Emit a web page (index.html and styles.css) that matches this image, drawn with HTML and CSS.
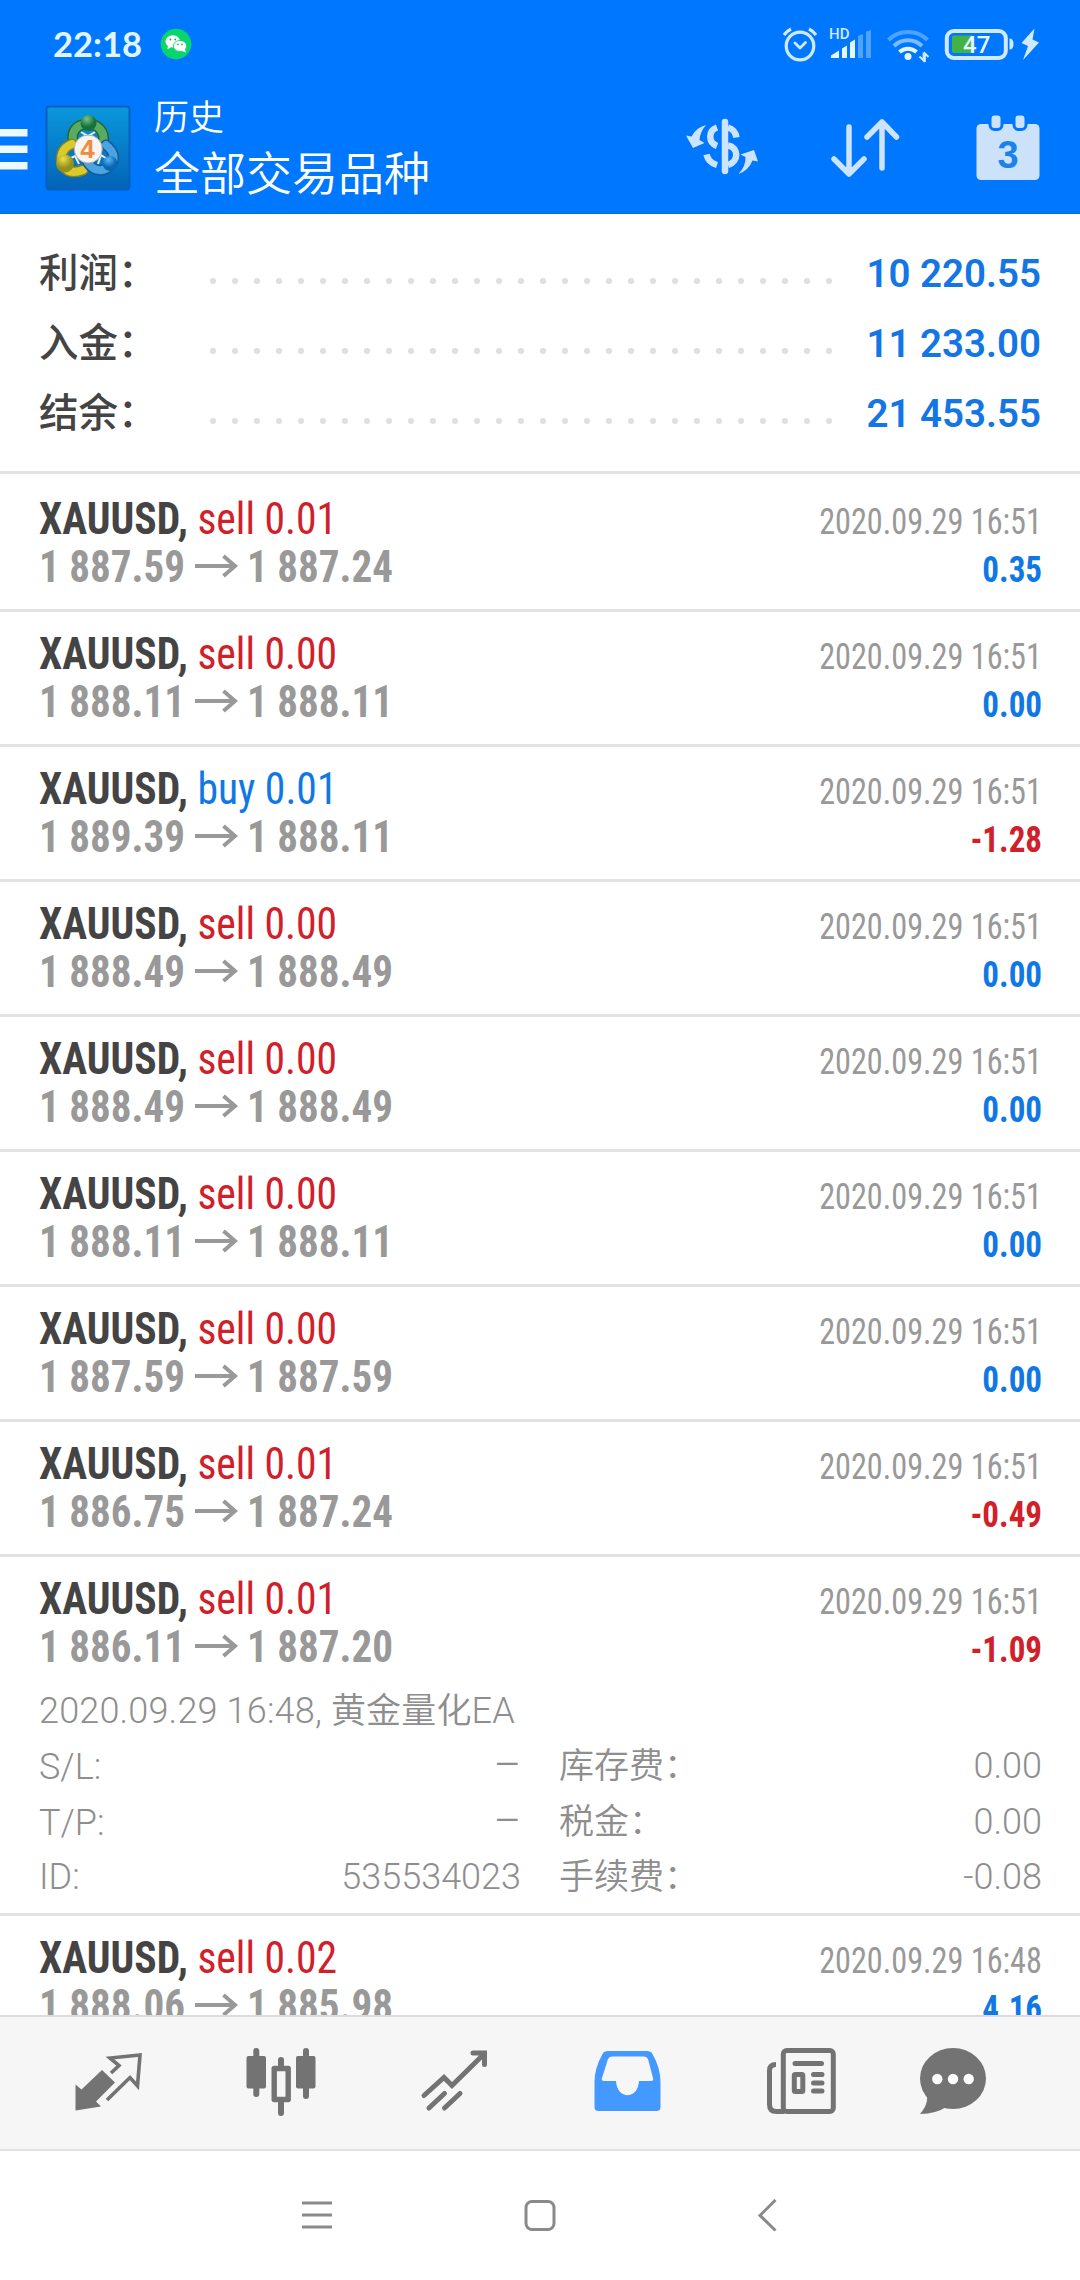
FILE: index.html
```
<!DOCTYPE html>
<html lang="zh-CN">
<head>
<meta charset="utf-8">
<title>历史</title>
<link rel="stylesheet" href="styles.css">
</head>
<body>
<div class="screen">
  <header class="header">
    <div class="status">
      <span class="clock">22:18</span>
      <svg class="wechat" width="32" height="32" viewBox="0 0 32 32">
        <circle cx="16" cy="16" r="15.3" fill="#06d66b"/>
        <ellipse cx="12.8" cy="13.4" rx="7.3" ry="6.2" fill="#fff"/>
        <path d="M8 17l-.5 4.3 4-2.2z" fill="#fff"/>
        <ellipse cx="20" cy="18" rx="6.6" ry="5.6" fill="#fff" stroke="#06d66b" stroke-width=".8"/>
        <path d="M21 22.5l4.7 2-.8-4z" fill="#fff"/>
        <g fill="#06a858"><circle cx="10.4" cy="11.5" r=".9"/><circle cx="15.2" cy="11.5" r=".9"/><circle cx="17.9" cy="16.4" r=".8"/><circle cx="22" cy="16.4" r=".8"/></g>
      </svg>
      <svg class="indicators" width="264" height="48" viewBox="780 20 264 48">
        <g fill="none" stroke="#cfeaff" stroke-width="3.2" stroke-linecap="round" stroke-linejoin="round">
          <circle cx="800" cy="46" r="13.8"/>
          <path d="M795 43l5 5 5.5-5.5" stroke-width="2.8"/>
          <path d="M784 35q3-4 7-6M809 29q4 2 7 6" stroke-linecap="butt"/>
        </g>
        <text x="829" y="39.3" class="hd">HD</text>
        <path d="M831 58v-2.500l8-5v7.500zM842 58V48.500l5-3V58zM850 58V42.500l5-3V58z" fill="#e6f6ff"/>
        <path d="M858 58V36l5-2v24zM866 58V31.500l5-1.500v28z" fill="#4da3ff"/>
        <g fill="none" stroke-width="4">
          <path d="M888.500 40a28 28 0 0 1 39 0" stroke="#4da3ff"/>
          <path d="M894 46a20 20 0 0 1 28 0" stroke="#7dbcff"/>
          <path d="M899.500 52a12.500 12.500 0 0 1 17 0" stroke="#e6f6ff"/>
        </g>
        <circle cx="908" cy="56.600" r="3.500" fill="#e6f6ff"/>
        <path d="M919.500 56.500l4 4V52.500M928.500 57l-3.500-3.500v8.500" fill="none" stroke="#cfeaff" stroke-width="1.800"/>
        <rect x="952" y="35.500" width="22" height="17.500" rx="2" fill="#43b244"/>
        <rect x="946.800" y="31" width="59" height="27" rx="7" fill="none" stroke="#cfeaff" stroke-width="4"/>
        <path d="M1009.500 38.500q4 0 4 5.500t-4 5.500z" fill="#cfeaff"/>
        <text x="963" y="52.800" class="charge">47</text>
        <path d="M1034.500 28.500l-13 14.500 6.500 3-5 14 16-17.500-6.500-3z" fill="#cfeaff"/>
      </svg>
    </div>
    <div class="appbar">
      <svg class="menu" width="28" height="44" viewBox="0 0 28 44"><path d="M0 2h27.500v7.500H0zM0 18.500h27.500v7.500H0zM0 35h27.500v7.500H0z" fill="#eef8ff"/></svg>
      <svg class="logo" width="86" height="86" viewBox="0 0 86 86">
        <defs>
          <linearGradient id="tile" x2="0" y2="1"><stop offset="0" stop-color="#0a98dc"/><stop offset="1" stop-color="#0463b6"/></linearGradient>
          <radialGradient id="gr" cx=".4" cy=".25"><stop offset="0" stop-color="#7cc487"/><stop offset="1" stop-color="#15713a"/></radialGradient>
          <radialGradient id="ye" cx=".4" cy=".25"><stop offset="0" stop-color="#f0e14a"/><stop offset="1" stop-color="#94901c"/></radialGradient>
          <radialGradient id="bl" cx=".4" cy=".25"><stop offset="0" stop-color="#5db8f3"/><stop offset="1" stop-color="#0868b4"/></radialGradient>
        </defs>
        <rect x="1.500" y="1.500" width="83" height="83" rx="3" fill="url(#tile)" stroke="#0561c0" stroke-width="2"/>
        <g fill="none" stroke-linecap="round">
          <path d="M28 36C26 24 34 19 43 19s18 7 15 19" stroke="#236637" stroke-width="11"/>
          <path d="M28 36C26 24 34 19 43 19s18 7 15 19" stroke="#58ac62" stroke-width="8"/>
          <path d="M27 39C17 43 14 52 18 60s12 8 20 5" stroke="#858124" stroke-width="11"/>
          <path d="M27 39C17 43 14 52 18 60s12 8 20 5" stroke="#d9cb2b" stroke-width="8"/>
          <path d="M61 40C71 48 70 56 65 61s-15 7-22-3" stroke="#145a98" stroke-width="11"/>
          <path d="M61 40C71 48 70 56 65 61s-15 7-22-3" stroke="#4ba3e2" stroke-width="8"/>
        </g>
        <path d="M36 27l7 4 7-4M24 54l6-3 4 8M62 54l-6-4-3 9" fill="none" stroke="#e9f3ec" stroke-width="2"/>
        <circle cx="43.500" cy="18" r="8" fill="url(#gr)"/>
        <circle cx="20" cy="58.500" r="9" fill="url(#ye)"/>
        <circle cx="65" cy="58.500" r="7.500" fill="url(#bl)"/>
        <circle cx="43.200" cy="44" r="14" fill="#f7f5f2" stroke="#b7b0a0"/>
        <text x="42.500" y="53" class="four">4</text>
      </svg>
      <div class="titles"><div class="title">历史</div><div class="subtitle">全部交易品种</div></div>
      <svg class="actions" width="376" height="70" viewBox="680 112 376 70">
        <g fill="none" stroke="#cce4ff" stroke-width="6.500">
          <path d="M725 122v49" stroke-linecap="round"/>
          <path d="M717 127.500c-9 3-9 15 0 18.500M706.500 154.500q2 8 10.500 10.500M728 127.500q7 2 8.500 10M728 145.500c11 2 11 16 0 19.500"/>
        </g>
        <path d="M686 135.500l5.500 1Q696 127.500 706 125 700 132 699.500 140l5 3-11.500 5zM738.500 174Q749 170 752.500 160.500l5.500 1-4-11.500-13.500 4.500 5 2.500Q746 166 738.500 174z" fill="#cce4ff"/>
        <path d="M849 127v46M834 159l15 15 15-15M882 168v-46M867 137l15-15 14.500 15" fill="none" stroke="#cce4ff" stroke-width="5.500" stroke-linecap="round" stroke-linejoin="round"/>
        <rect x="976.500" y="124" width="63" height="56" rx="4.500" fill="#cce2fa"/>
        <rect x="991.500" y="115.500" width="9" height="12.500" rx="3" fill="#cce2fa" stroke="#0077ff" stroke-width="6" paint-order="stroke"/>
        <rect x="1015.500" y="115.500" width="9" height="12.500" rx="3" fill="#cce2fa" stroke="#0077ff" stroke-width="6" paint-order="stroke"/>
        <text x="1008" y="167.500" class="day">3</text>
      </svg>
    </div>
  </header>

  <section class="summary">
    <div class="sum"><span>利润：</span><i class="dots"></i><b>10 220.55</b></div>
    <div class="sum"><span>入金：</span><i class="dots"></i><b>11 233.00</b></div>
    <div class="sum"><span>结余：</span><i class="dots"></i><b>21 453.55</b></div>
  </section>

  <main class="deals">
    <article class="deal first">
      <div class="line"><span class="sym"><b>XAUUSD,</b> <span class="neg">sell 0.01</span></span><time>2020.09.29 16:51</time></div>
      <div class="line"><span class="price">1 887.59</span><svg class="arrow" viewBox="0 0 43 24"><path d="M0 12h40M28.500 2L40 12 28.500 22"/></svg><span class="price">1 887.24</span><span class="profit pos">0.35</span></div>
    </article>
    <article class="deal">
      <div class="line"><span class="sym"><b>XAUUSD,</b> <span class="neg">sell 0.00</span></span><time>2020.09.29 16:51</time></div>
      <div class="line"><span class="price">1 888.11</span><svg class="arrow" viewBox="0 0 43 24"><path d="M0 12h40M28.500 2L40 12 28.500 22"/></svg><span class="price">1 888.11</span><span class="profit pos">0.00</span></div>
    </article>
    <article class="deal">
      <div class="line"><span class="sym"><b>XAUUSD,</b> <span class="pos">buy 0.01</span></span><time>2020.09.29 16:51</time></div>
      <div class="line"><span class="price">1 889.39</span><svg class="arrow" viewBox="0 0 43 24"><path d="M0 12h40M28.500 2L40 12 28.500 22"/></svg><span class="price">1 888.11</span><span class="profit neg">-1.28</span></div>
    </article>
    <article class="deal">
      <div class="line"><span class="sym"><b>XAUUSD,</b> <span class="neg">sell 0.00</span></span><time>2020.09.29 16:51</time></div>
      <div class="line"><span class="price">1 888.49</span><svg class="arrow" viewBox="0 0 43 24"><path d="M0 12h40M28.500 2L40 12 28.500 22"/></svg><span class="price">1 888.49</span><span class="profit pos">0.00</span></div>
    </article>
    <article class="deal">
      <div class="line"><span class="sym"><b>XAUUSD,</b> <span class="neg">sell 0.00</span></span><time>2020.09.29 16:51</time></div>
      <div class="line"><span class="price">1 888.49</span><svg class="arrow" viewBox="0 0 43 24"><path d="M0 12h40M28.500 2L40 12 28.500 22"/></svg><span class="price">1 888.49</span><span class="profit pos">0.00</span></div>
    </article>
    <article class="deal">
      <div class="line"><span class="sym"><b>XAUUSD,</b> <span class="neg">sell 0.00</span></span><time>2020.09.29 16:51</time></div>
      <div class="line"><span class="price">1 888.11</span><svg class="arrow" viewBox="0 0 43 24"><path d="M0 12h40M28.500 2L40 12 28.500 22"/></svg><span class="price">1 888.11</span><span class="profit pos">0.00</span></div>
    </article>
    <article class="deal">
      <div class="line"><span class="sym"><b>XAUUSD,</b> <span class="neg">sell 0.00</span></span><time>2020.09.29 16:51</time></div>
      <div class="line"><span class="price">1 887.59</span><svg class="arrow" viewBox="0 0 43 24"><path d="M0 12h40M28.500 2L40 12 28.500 22"/></svg><span class="price">1 887.59</span><span class="profit pos">0.00</span></div>
    </article>
    <article class="deal">
      <div class="line"><span class="sym"><b>XAUUSD,</b> <span class="neg">sell 0.01</span></span><time>2020.09.29 16:51</time></div>
      <div class="line"><span class="price">1 886.75</span><svg class="arrow" viewBox="0 0 43 24"><path d="M0 12h40M28.500 2L40 12 28.500 22"/></svg><span class="price">1 887.24</span><span class="profit neg">-0.49</span></div>
    </article>
    <article class="deal open">
      <div class="line"><span class="sym"><b>XAUUSD,</b> <span class="neg">sell 0.01</span></span><time>2020.09.29 16:51</time></div>
      <div class="line"><span class="price">1 886.11</span><svg class="arrow" viewBox="0 0 43 24"><path d="M0 12h40M28.500 2L40 12 28.500 22"/></svg><span class="price">1 887.20</span><span class="profit neg">-1.09</span></div>
      <div class="detail">
        <div class="note">2020.09.29 16:48, <span class="cjk">黄金量化</span>EA</div>
        <div class="pair"><span>S/L:</span><span class="dash">–</span></div><div class="pair"><span class="cjk">库存费：</span><span>0.00</span></div>
        <div class="pair"><span>T/P:</span><span class="dash">–</span></div><div class="pair"><span class="cjk">税金：</span><span>0.00</span></div>
        <div class="pair"><span>ID:</span><span>535534023</span></div><div class="pair"><span class="cjk">手续费：</span><span>-0.08</span></div>
      </div>
    </article>
    <article class="deal">
      <div class="line"><span class="sym"><b>XAUUSD,</b> <span class="neg">sell 0.02</span></span><time>2020.09.29 16:48</time></div>
      <div class="line"><span class="price">1 888.06</span><svg class="arrow" viewBox="0 0 43 24"><path d="M0 12h40M28.500 2L40 12 28.500 22"/></svg><span class="price">1 885.98</span><span class="profit pos">4.16</span></div>
    </article>
  </main>

  <nav class="tabs">
    <svg viewBox="72 2032 72 100"><path d="M75.500 2084.500l6 5 20.500-19.500 13 12.500-19 19 5 5-25.500 4z" fill="#737373"/><path d="M111 2073l8-7.500-9-7.500 30-3-2.500 31-7.500-8.500L107 2100" fill="none" stroke="#737373" stroke-width="3.600"/></svg>
    <svg viewBox="245 2032 72 100"><g fill="#737373"><rect x="246.500" y="2056" width="19.500" height="32.500" rx="2"/><rect x="296" y="2056" width="19.500" height="32.500" rx="2"/></g><g fill="none" stroke="#737373" stroke-width="6" stroke-linecap="round"><path d="M256.300 2051v43M306 2051v45M281 2060v6M281 2102v11"/></g><rect x="274.200" y="2068.500" width="14" height="31" fill="none" stroke="#737373" stroke-width="5.400" stroke-linejoin="round"/></svg>
    <svg viewBox="418 2032 72 100"><path d="M424 2095.500l20-18 8 8 32.500-32M473 2053h11.500v11.500M429 2108l15.500-14.500M444.500 2108l15.500-14.500" fill="none" stroke="#737373" stroke-width="5" stroke-linecap="round"/></svg>
    <svg viewBox="591 2032 72 100"><path fill-rule="evenodd" fill="#4399ff" d="M608 2051h39q4 0 5.500 3 8 14 8 28v25q0 4-4 4h-58q-4 0-4-4v-25q0-14 8-28 1.500-3 5.500-3zM612 2056.500q-3 0-4 2.500l-6 19q-1 3 2 3h12c1 19 22 19 23 0h12q3 0 2-3l-5-19q-1-2.500-4-2.500z"/></svg>
    <svg viewBox="764 2032 72 100"><g fill="none" stroke="#737373" stroke-width="5" stroke-linecap="round"><rect x="783.300" y="2050.500" width="50" height="61" rx="3.500"/><path d="M776 2064.500q-6.500 0-6.500 6v34q0 7 7 7h8" stroke-linecap="butt"/><path d="M795 2063.500h26.500M813.500 2074.500h8.500M813.500 2083h8.500M813.500 2091h8.500"/><rect x="794.300" y="2074.500" width="8.500" height="17" rx="1"/></g></svg>
    <svg class="chat" viewBox="917 2032 72 100"><g fill="#737373"><ellipse cx="953" cy="2078.500" rx="33" ry="30.500"/><path d="M925 2090q6 11-5 24 16 0 28-8z"/></g><g fill="#fff"><circle cx="937.300" cy="2079" r="5.200"/><circle cx="953" cy="2079" r="5.200"/><circle cx="968.700" cy="2079" r="5.200"/></g></svg>
  </nav>
  <footer class="system">
    <svg width="32" height="32" viewBox="0 0 32 32"><path d="M1 4h30M1 16h30M1 28h30"/></svg>
    <svg width="32" height="32" viewBox="0 0 32 32"><rect x="2" y="2.500" width="28" height="28" rx="6"/></svg>
    <svg width="32" height="32" viewBox="0 0 32 32"><path d="M28.500 1L13 16.500l15.500 15"/></svg>
  </footer>
</div>
</body>
</html>
```
FILE: styles.css
```
* { box-sizing: border-box; }
body {
  margin: 0;
  background: #fff;
  font-family: Roboto, "Noto Sans CJK SC", sans-serif;
}
svg { display: block; flex: none; }

.screen {
  width: 1080px;
  height: 2280px;
  display: flex;
  flex-direction: column;
  overflow: hidden;
}

/* Header */
.header {
  height: 214px;
  flex: none;
  background: #0077ff;
  border-bottom: 1px solid #0a6fdc;
  color: #fff;
}
.status {
  height: 88px;
  display: flex;
  align-items: center;
  padding: 0 36px 0 53px;
}
.clock { width: 107px; font: 700 34.500px/40px Lato, sans-serif; color: #e2f4ff; }
.indicators { margin-left: auto; }
.hd { font: 500 15px Roboto, sans-serif; fill: #cfeaff; }
.charge { font: 500 24px Roboto, sans-serif; fill: #e6f6ff; }
.four { font: 700 26px "Liberation Sans", sans-serif; fill: #f08a3c; text-anchor: middle; }
.day { font: 700 38px "Liberation Sans", sans-serif; fill: #1b82ea; text-anchor: middle; }
.appbar {
  height: 124px;
  display: flex;
  align-items: flex-start;
  padding-right: 24px;
}
.menu { margin-top: 39px; }
.logo { margin: 17px 0 0 17px; }
.titles { margin-left: 23px; font-weight: 350; white-space: nowrap; }
.title { margin-top: 5px; font-size: 35px; line-height: 52px; }
.subtitle { margin-top: -1px; font-size: 46px; line-height: 60px; }
.actions { margin: 24px 0 0 auto; }

/* Account summary */
.summary {
  height: 260px;
  flex: none;
  padding: 25px 39px 0;
  border-bottom: 3px solid #e3e3e3;
}
.sum {
  display: flex;
  height: 70px;
  line-height: 70px;
  font-size: 39.500px;
  font-weight: 500;
  color: #444;
}
.sum span { width: 163px; }
.sum b { margin-left: auto; font-weight: 650; font-size: 38.500px; color: #1476e4; }
.dots {
  width: 638px;
  height: 8px;
  margin-top: 38px;
  background: radial-gradient(circle, #e0e0e0 2.700px, transparent 3.600px) 0 0 / 22px 8px repeat-x;
}

/* Deals */
.deals { height: 1541px; flex: none; overflow: hidden; }
.deal { padding: 18px 38px 18px 39px; border-bottom: 3px solid #e3e3e3; }
.deal.first { padding-top: 21px; }
.line {
  display: flex;
  align-items: baseline;
  height: 48px;
  line-height: 48px;
  font-family: "Roboto Condensed", Roboto, sans-serif;
  white-space: nowrap;
}
.sym, .price { font-size: 44px; transform: scaleX(.945); transform-origin: left; }
.sym { color: #444; }
.price { width: 156px; font-weight: 700; color: #999; transform: scaleX(.934); }
.arrow {
  width: 43px;
  height: 24px;
  margin-right: 9px;
  align-self: center;
  transform: translateY(-1px);
  fill: none;
  stroke: #999;
  stroke-width: 4;
}
time, .profit { margin-left: auto; font-size: 36px; transform: scaleX(.895); transform-origin: right; }
time { color: #999; }
.profit { font-weight: 700; transform: scaleX(.918); }
.pos { color: #1078e4; }
.neg { color: #d0202a; }
.open { padding-bottom: 7.500px; }
.detail {
  display: grid;
  grid-template-columns: 482px 482px;
  column-gap: 39px;
  grid-auto-rows: 55.500px;
  margin-top: 12.500px;
  font-size: 36px;
  font-weight: 330;
  line-height: 55.500px;
  color: #8e8e8e;
}
.note { grid-column: 1 / 3; letter-spacing: .17px; }
.cjk { font-size: 35px; font-weight: 350; line-height: 55px; }
.pair { display: flex; justify-content: space-between; align-items: baseline; }
.pair .cjk { margin-left: -1px; }
.dash { font-size: 42px; line-height: 51px; }

/* Tab bar */
.tabs {
  height: 136px;
  flex: none;
  display: flex;
  gap: 101px;
  padding: 15px 0 0 72px;
  background: #f6f6f6;
  border-top: 2px solid #dcdcdc;
  border-bottom: 2px solid #e2e2e2;
}
.tabs svg { width: 72px; height: 100px; }
.tabs .chat { margin-left: -20px; }

/* System navigation */
.system {
  height: 129px;
  display: flex;
  gap: 191px;
  align-items: center;
  padding: 0 0 2px 301px;
  background: #fff;
}
.system svg { fill: none; stroke: #8a8a8a; stroke-width: 3; }
```
